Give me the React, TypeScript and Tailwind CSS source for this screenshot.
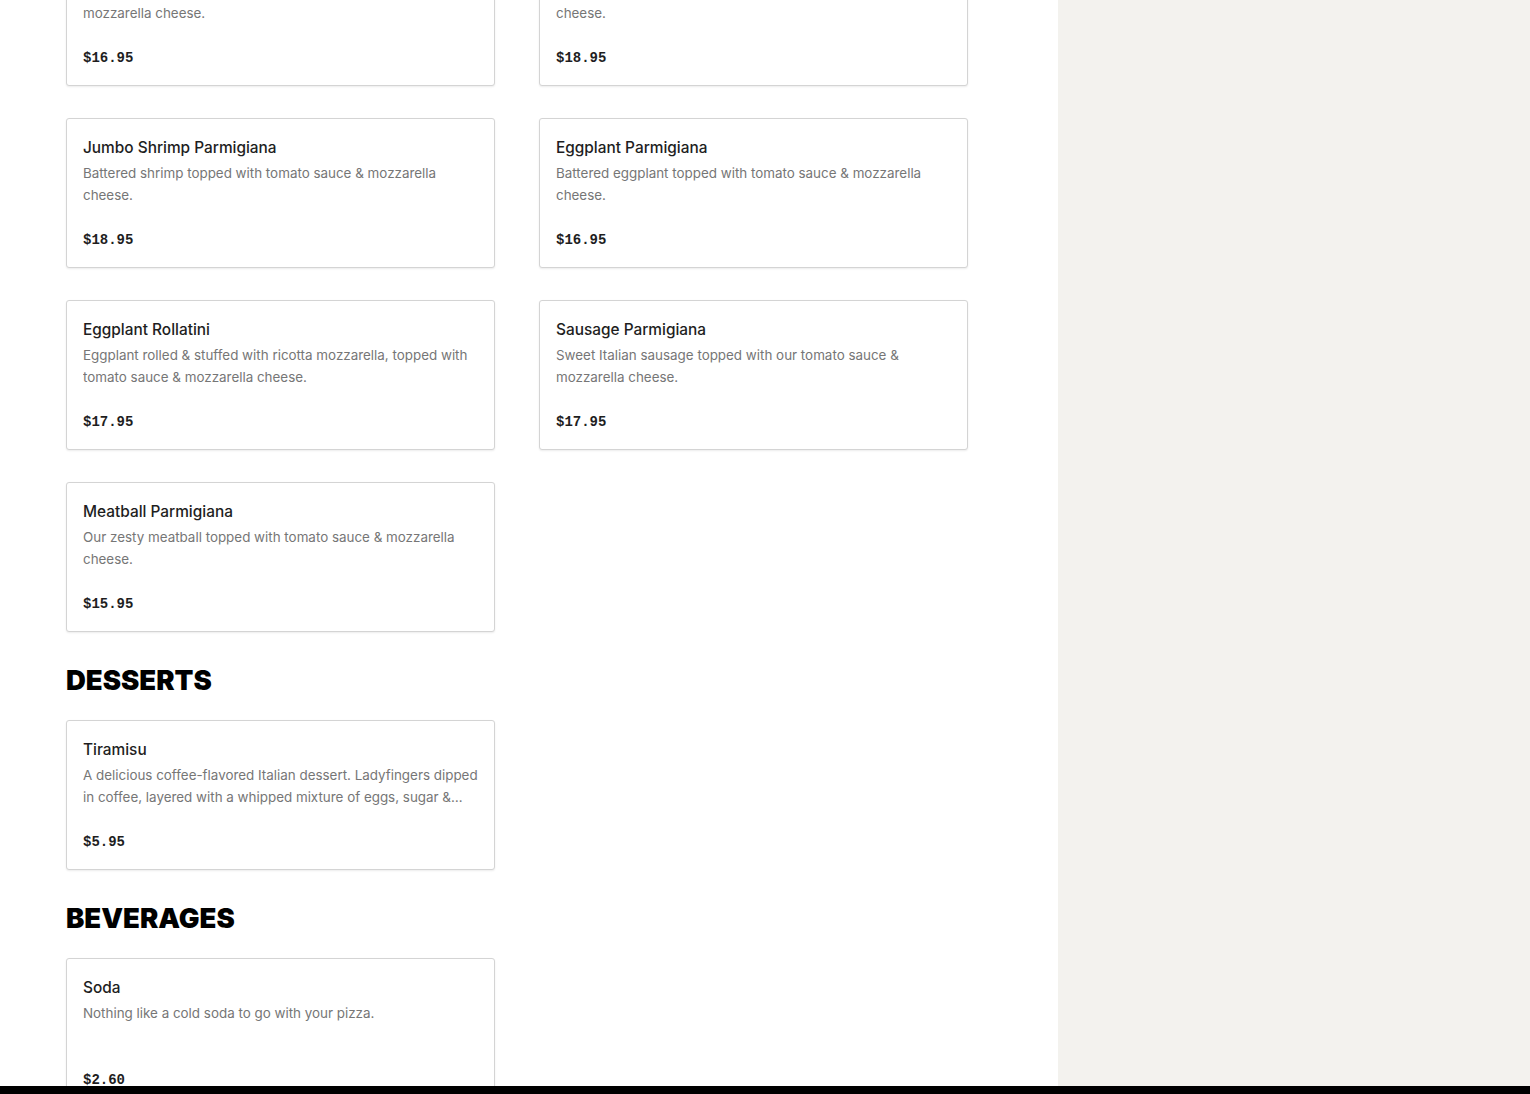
import React from "react";

type Item = { name: string; desc: string; price: string };

const entrees: Item[] = [
  { name: "Chicken Parmigiana", desc: "Breaded chicken cutlet topped with tomato sauce & mozzarella cheese.", price: "$16.95" },
  { name: "Veal Parmigiana", desc: "Breaded veal cutlet topped with tomato sauce & mozzarella cheese.", price: "$18.95" },
  { name: "Jumbo Shrimp Parmigiana", desc: "Battered shrimp topped with tomato sauce & mozzarella cheese.", price: "$18.95" },
  { name: "Eggplant Parmigiana", desc: "Battered eggplant topped with tomato sauce & mozzarella cheese.", price: "$16.95" },
  { name: "Eggplant Rollatini", desc: "Eggplant rolled & stuffed with ricotta mozzarella, topped with tomato sauce & mozzarella cheese.", price: "$17.95" },
  { name: "Sausage Parmigiana", desc: "Sweet Italian sausage topped with our tomato sauce & mozzarella cheese.", price: "$17.95" },
  { name: "Meatball Parmigiana", desc: "Our zesty meatball topped with tomato sauce & mozzarella cheese.", price: "$15.95" },
];

const desserts: Item[] = [
  {
    name: "Tiramisu",
    desc: "A delicious coffee-flavored Italian dessert. Ladyfingers dipped in coffee, layered with a whipped mixture of eggs, sugar & mascarpone cheese, flavored with cocoa.",
    price: "$5.95",
  },
];

const beverages: Item[] = [
  { name: "Soda", desc: "Nothing like a cold soda to go with your pizza.", price: "$2.60" },
];

function Card({ item }: { item: Item }) {
  return (
    <div className="border border-[#d4d4d4] rounded-[3px] bg-white px-4 pt-[17px] pb-[17px] shadow-[0_1px_2px_rgba(0,0,0,0.08)]">
      <div className="text-[15.4px] leading-[24px] font-medium text-[#1e1e1e]">{item.name}</div>
      <div className="mt-[2px] h-[44px] text-[13.4px] leading-[22px] text-[#767676] line-clamp-2">{item.desc}</div>
      <div className="mt-[24px] text-[14px] leading-[20px] font-bold text-[#1e1e1e] font-['Liberation_Mono',monospace]">
        {item.price}
      </div>
    </div>
  );
}

function Grid({ items }: { items: Item[] }) {
  return (
    <div className="grid grid-cols-2 gap-x-[44px] gap-y-8">
      {items.map((it) => (
        <Card key={it.name} item={it} />
      ))}
    </div>
  );
}

function Heading({ children }: { children: React.ReactNode }) {
  return (
    <h2 className="mt-[31px] mb-[23px] text-[27.5px] leading-[34px] font-black text-black uppercase">
      {children}
    </h2>
  );
}

export default function App() {
  return (
    <div className="h-[1094px] overflow-hidden flex flex-col font-['Inter',sans-serif]">
      <div className="flex flex-1 min-h-0">
        <main className="w-[1058px] bg-white overflow-hidden">
          <div className="-mt-[64px] pl-[66px] w-[968px]">
            <Grid items={entrees} />
            <Heading>Desserts</Heading>
            <Grid items={desserts} />
            <Heading>Beverages</Heading>
            <Grid items={beverages} />
          </div>
        </main>
        <aside className="flex-1 bg-[#f3f2ee]" />
      </div>
      <div className="h-[8px] bg-black" />
    </div>
  );
}
